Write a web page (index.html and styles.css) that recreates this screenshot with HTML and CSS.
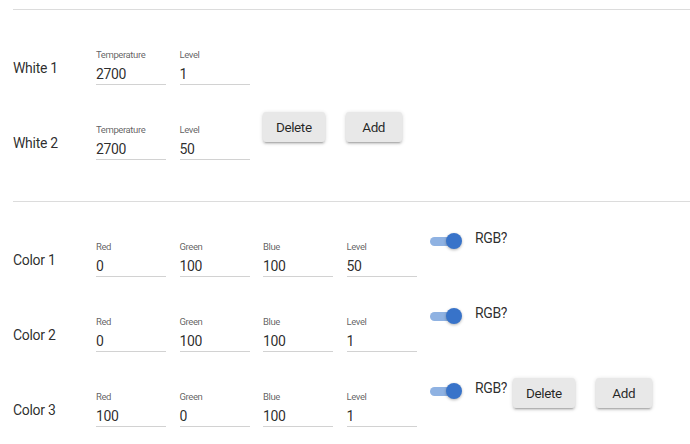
FILE: index.html
```html
<!DOCTYPE html>
<html lang="en">
<head>
<meta charset="utf-8">
<title>Lights</title>
<link rel="stylesheet" href="styles.css">
</head>
<body>
<div class="page">
  <hr class="divider">
  <section class="group">
    <div class="row">
      <div class="row-label">White 1</div>
      <div class="field"><span class="field-label">Temperature</span><span class="field-value">2700</span></div>
      <div class="field"><span class="field-label">Level</span><span class="field-value">1</span></div>
    </div>
    <div class="row">
      <div class="row-label">White 2</div>
      <div class="field"><span class="field-label">Temperature</span><span class="field-value">2700</span></div>
      <div class="field"><span class="field-label">Level</span><span class="field-value">50</span></div>
      <button class="btn btn-white">Delete</button>
      <button class="btn btn-white btn-add">Add</button>
    </div>
  </section>
  <hr class="divider">
  <section class="group group-colors">
    <div class="row">
      <div class="row-label">Color 1</div>
      <div class="field"><span class="field-label">Red</span><span class="field-value">0</span></div>
      <div class="field"><span class="field-label">Green</span><span class="field-value">100</span></div>
      <div class="field"><span class="field-label">Blue</span><span class="field-value">100</span></div>
      <div class="field"><span class="field-label">Level</span><span class="field-value">50</span></div>
      <div class="rgb">
        <span class="switch"><span class="track"></span><span class="thumb"></span></span>
        <span class="rgb-text">RGB?</span>
      </div>
    </div>
    <div class="row">
      <div class="row-label">Color 2</div>
      <div class="field"><span class="field-label">Red</span><span class="field-value">0</span></div>
      <div class="field"><span class="field-label">Green</span><span class="field-value">100</span></div>
      <div class="field"><span class="field-label">Blue</span><span class="field-value">100</span></div>
      <div class="field"><span class="field-label">Level</span><span class="field-value">1</span></div>
      <div class="rgb">
        <span class="switch"><span class="track"></span><span class="thumb"></span></span>
        <span class="rgb-text">RGB?</span>
      </div>
    </div>
    <div class="row">
      <div class="row-label">Color 3</div>
      <div class="field"><span class="field-label">Red</span><span class="field-value">100</span></div>
      <div class="field"><span class="field-label">Green</span><span class="field-value">0</span></div>
      <div class="field"><span class="field-label">Blue</span><span class="field-value">100</span></div>
      <div class="field"><span class="field-label">Level</span><span class="field-value">1</span></div>
      <div class="rgb">
        <span class="switch"><span class="track"></span><span class="thumb"></span></span>
        <span class="rgb-text">RGB?</span>
      </div>
      <button class="btn btn-color">Delete</button>
      <button class="btn btn-color btn-add">Add</button>
    </div>
  </section>
</div>
</body>
</html>
```
FILE: styles.css
```css
html, body {
  margin: 0;
  background: #ffffff;
}
body {
  font-family: Roboto, "Liberation Sans", Arial, sans-serif;
  color: rgba(0, 0, 0, 0.84);
  overflow: hidden;
}
.page {
  padding: 9px 0 0 13px;
}
.divider {
  margin: 0;
  border: 0;
  height: 1px;
  background: #dcdcdc;
}
.group {
  padding: 20px 0 21px;
}
.group-colors {
  padding-top: 20px;
}
.row {
  display: flex;
  align-items: center;
  height: 75px;
}
.row-label {
  width: 83px;
  flex: none;
  font-size: 14px;
  letter-spacing: -0.3px;
  line-height: 18px;
}
.field {
  width: 70px;
  flex: none;
  margin-right: 13.5px;
  margin-bottom: 1px;
  display: flex;
  flex-direction: column;
}
.field-label {
  font-size: 9.5px;
  letter-spacing: -0.4px;
  line-height: 12px;
  color: rgba(0, 0, 0, 0.64);
}
.field-value {
  margin-top: 4px;
  font-size: 14px;
  letter-spacing: -0.35px;
  line-height: 18px;
  padding-bottom: 1px;
  border-bottom: 1.5px solid #d2d2d2;
}
.btn {
  align-self: flex-start;
  flex: none;
  height: 30px;
  min-width: 56px;
  padding: 0 13px;
  border: 0;
  border-radius: 3px;
  background: #e8e8e8;
  color: rgba(0, 0, 0, 0.85);
  font-family: Roboto, "Liberation Sans", Arial, sans-serif;
  font-size: 13.5px;
  letter-spacing: -0.4px;
  box-shadow: 0 1px 4px rgba(0, 0, 0, 0.16), 0 2px 2px rgba(0, 0, 0, 0.12), 0 3px 1px -2px rgba(0, 0, 0, 0.14);
}
.btn-white {
  margin-top: 7px;
}
.btn-color {
  margin-top: 6px;
}
.btn-add {
  margin-left: 21px;
}
.rgb {
  align-self: flex-start;
  display: flex;
  align-items: flex-start;
  flex: none;
}
.switch {
  position: relative;
  display: block;
  width: 32px;
  height: 20px;
  margin-top: 9px;
}
.track {
  position: absolute;
  left: 0;
  top: 5.5px;
  width: 29px;
  height: 9px;
  border-radius: 4.5px;
  background: #8fb2e2;
}
.thumb {
  position: absolute;
  right: 0;
  top: 2px;
  width: 16px;
  height: 16px;
  border-radius: 50%;
  background: #3873c9;
  box-shadow: 0 1px 3px rgba(0, 0, 0, 0.3);
}
.rgb-text {
  margin-left: 13px;
  margin-top: 7px;
  font-size: 14px;
  letter-spacing: -0.35px;
  line-height: 18px;
}
.btn-color {
  margin-left: 6px;
}
.btn-color.btn-add {
  margin-left: 21px;
}
```
